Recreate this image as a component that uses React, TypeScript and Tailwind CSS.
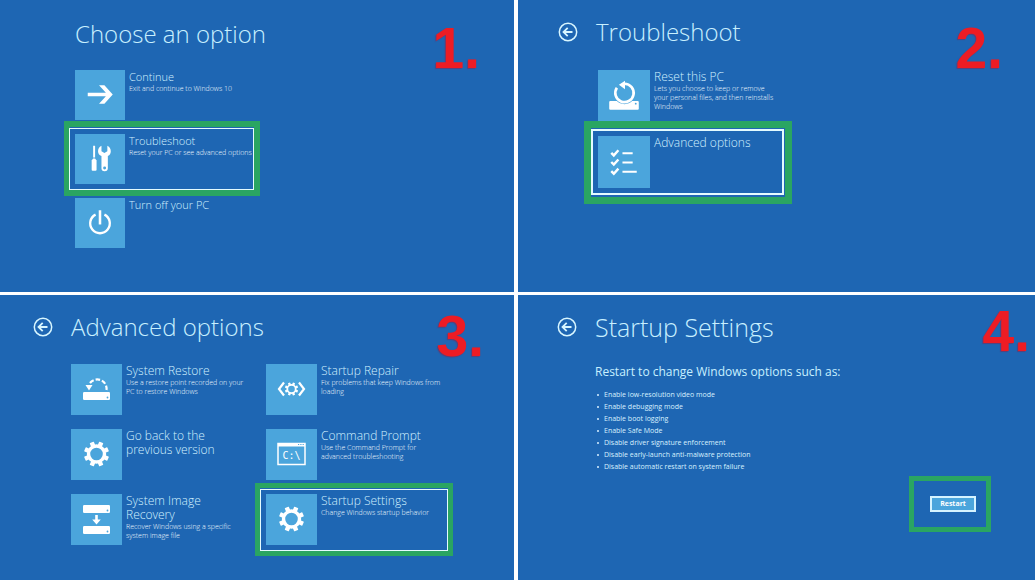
import React from 'react';
import clsx from 'clsx';

type Size = 'sm' | 'md' | 'lg';

const tileSize: Record<Size, string> = {
  sm: 'w-[50px] h-[50px]',
  md: 'w-[51px] h-[51px]',
  lg: 'w-[52px] h-[52px]',
};

const nameSize: Record<Size, string> = {
  sm: 'text-[11px]',
  md: 'text-[12px]',
  lg: 'text-[12px]',
};

function ArrowIcon() {
  return <path fill="#fff" d="M24.500 15.500h5.500l8.500 9.500-8.500 9.500h-5.500l7-7.800H13v-3.400h18.500z" />;
}

function ToolsIcon() {
  return (
    <g fill="#fff">
      <path d="M18.500 12h2v12h-2z" />
      <path d="M17 27l1.500-2h2l1.500 2v9.500q0 1-1 1h-3q-1 0-1-1z" />
      <path
        fillRule="evenodd"
        d="M27 12v5.500l3 2 3-2V12q3.500 2 3.500 5.500 0 3.500-3 5V35q0 3-3.300 3T27 35V22.500q-3.500-1.500-3.500-5T27 12zm3.200 21.200a1.500 1.500 0 1 0 .01 3 1.500 1.500 0 1 0-.01-3z"
      />
    </g>
  );
}

function PowerIcon() {
  return (
    <g fill="none" stroke="#fff" strokeWidth="2.400">
      <path d="M21 17A10 10 0 1 0 30 17" />
      <path d="M25.500 12.500v14.500" strokeWidth="2.600" />
    </g>
  );
}

function Drive({ y }: { y: number }) {
  return (
    <g>
      <rect x="12" y={y} width="27" height="8" rx="1.200" fill="#fff" />
      <circle cx="36.500" cy={y + 5.5} r="0.900" fill="#4ba5dc" />
    </g>
  );
}

function ResetIcon() {
  return (
    <g>
      <rect x="11" y="30.500" width="29" height="8.500" rx="1" fill="#fff" />
      <circle cx="37" cy="33" r="0.900" fill="#4ba5dc" />
      <circle cx="26" cy="22.500" r="11" fill="#4ba5dc" />
      <path d="M18.500 17.500A9 9 0 1 0 26 13.500" fill="none" stroke="#fff" strokeWidth="2.600" />
      <path d="M20.500 14.500l6-4v8.500z" fill="#fff" />
    </g>
  );
}

function ChecklistIcon() {
  return (
    <g fill="none" stroke="#fff" strokeWidth="2">
      {[17, 26, 35].map(y => (
        <path key={y} strokeWidth="2.400" d={`M13 ${y - 0.5}l2.500 2.500 4.500-5`} />
      ))}
      <path d="M24 17h10M24 26h10M24 35h14" />
    </g>
  );
}

function RestoreIcon() {
  return (
    <g>
      <path d="M35.500 26A9.300 9.300 0 0 0 18 20.500" fill="none" stroke="#fff" strokeWidth="2.200" strokeDasharray="4.500 2" />
      <path d="M14.500 21h7l-3.500 5.500z" fill="#fff" />
      <Drive y={28} />
    </g>
  );
}

function GearIcon({ r = 8, width = 3.4, tooth = 4.4 }: { r?: number; width?: number; tooth?: number }) {
  const outer = r + width / 2;
  return (
    <g fill="#fff">
      <circle cx="25.500" cy="25" r={r} fill="none" stroke="#fff" strokeWidth={width} />
      {[22.5, 67.5, 112.5, 157.5, 202.5, 247.5, 292.5, 337.5].map(a => (
        <rect
          key={a}
          x={25.5 - tooth / 2}
          y={25 - outer - tooth * 0.65}
          width={tooth}
          height={tooth}
          rx={tooth / 8}
          transform={`rotate(${a} 25.500 25)`}
        />
      ))}
    </g>
  );
}

function ImageRecoveryIcon() {
  return (
    <g>
      <Drive y={11} />
      <path d="M24.200 21h2.600v4.500h3l-4.300 5-4.300-5h3z" fill="#fff" />
      <Drive y={32} />
    </g>
  );
}

function RepairIcon() {
  return (
    <g>
      <path d="M18 18.500l-5 6.500 5 6.500M33 18.500l5 6.500-5 6.500" fill="none" stroke="#fff" strokeWidth="2.200" />
      <GearIcon r={4.2} width={1.8} tooth={2.4} />
    </g>
  );
}

function PromptIcon() {
  return (
    <g>
      <rect x="12" y="14.500" width="27" height="21" fill="none" stroke="#fff" strokeWidth="1.500" />
      <path d="M12 14h27v3.500H12z" fill="#fff" />
      <path d="M32 15.500h1.200M34.300 15.500h1.200M36.600 15.500h1.200" stroke="#4ba5dc" />
      <text x="25.500" y="29.500" fill="#fff" fontSize="10" fontFamily="'DejaVu Sans Mono', monospace" textAnchor="middle">
        C:\
      </text>
    </g>
  );
}

function BackButton() {
  return (
    <button type="button" aria-label="Back" className="shrink-0">
      <svg viewBox="0 0 20 20" className="block w-5 h-5" fill="none" stroke="#d8f6ff">
        <circle cx="10" cy="10" r="8.700" strokeWidth="1.500" />
        <path d="M5.500 10h9M9.700 5.800L5.500 10l4.200 4.200" strokeWidth="1.800" />
      </svg>
    </button>
  );
}

interface OptionProps {
  name: string;
  text?: string;
  icon: React.ReactNode;
  size: Size;
  nameClass?: string;
  // outline and frame of the option to pick
  outline?: string;
  frame?: string;
}

function Option({ name, text, icon, size, nameClass, outline, frame }: OptionProps) {
  return (
    <button type="button" className={clsx('relative flex items-start gap-1 text-left', outline && 'z-10')}>
      {outline && <span className={clsx('absolute border-[#2aa562]', outline)} />}
      {frame && <span className={clsx('absolute border-[#e4fbff]', frame)} />}
      <span className={clsx('relative shrink-0 bg-[#4ba5dc]', tileSize[size])}>
        <svg viewBox="0 0 51 51" className="block w-full h-full">
          {icon}
        </svg>
      </span>
      <span className="relative flex-1 min-w-0">
        <span className={clsx('block leading-[14px] font-light text-[#d2f1ff]', nameSize[size], nameClass)}>{name}</span>
        {text && <span className="block max-w-[125px] text-[7px] leading-[9px] font-light text-[#f0faff]">{text}</span>}
      </span>
    </button>
  );
}

function Step({ n, className }: { n: number; className: string }) {
  return (
    <span
      className={clsx(
        "absolute font-['Liberation_Sans',Arial,sans-serif] font-bold text-[57px] leading-[58px] text-[#ed1c24] [text-shadow:-1px_1px_1px_#5b3f78]",
        className
      )}
    >
      {n}.
    </span>
  );
}

function Panel({ children, className }: { children: React.ReactNode; className?: string }) {
  return <section className={clsx('relative flex flex-col bg-[#1e66b3]', className)}>{children}</section>;
}

function Title({ children, className = 'text-[24px]' }: { children: React.ReactNode; className?: string }) {
  return <h1 className={clsx('leading-[36px] font-light text-[#c8f0ff] whitespace-nowrap', className)}>{children}</h1>;
}

const settings = [
  'Enable low-resolution video mode',
  'Enable debugging mode',
  'Enable boot logging',
  'Enable Safe Mode',
  'Disable driver signature enforcement',
  'Disable early-launch anti-malware protection',
  'Disable automatic restart on system failure',
];

function App() {
  return (
    <main className="min-h-screen grid grid-cols-[minmax(0,514fr)_minmax(0,517fr)] grid-rows-[292fr_285fr] gap-x-1 gap-y-[3px] bg-white font-['Open_Sans','Noto_Sans',sans-serif]">
      <Panel className="pl-[75px] pt-4">
        <Title>Choose an option</Title>
        <div className="mt-[18px] w-[180px] flex flex-col gap-[14px]">
          <Option size="sm" name="Continue" text="Exit and continue to Windows 10" icon={<ArrowIcon />} />
          <Option
            size="sm"
            name="Troubleshoot"
            text="Reset your PC or see advanced options"
            icon={<ToolsIcon />}
            outline="-left-[11px] -right-[5px] -top-[13px] -bottom-[12px] border-[6px]"
            frame="-left-[6px] right-[1px] -top-[6px] -bottom-[6px] border"
          />
          <Option size="sm" name="Turn off your PC" icon={<PowerIcon />} />
        </div>
        <Step n={1} className="right-[34px] top-[19px]" />
      </Panel>

      <Panel className="pl-10 pt-[14px]">
        <div className="flex items-center gap-[18px]">
          <BackButton />
          <Title>Troubleshoot</Title>
        </div>
        <div className="mt-5 ml-10 w-[184px] flex flex-col gap-[14px]">
          <Option
            size="lg"
            name="Reset this PC"
            text="Lets you choose to keep or remove your personal files, and then reinstalls Windows"
            icon={<ResetIcon />}
          />
          <Option
            size="lg"
            name="Advanced options"
            icon={<ChecklistIcon />}
            outline="-left-[14px] -right-[10px] -top-[15px] -bottom-[16px] border-[7px]"
            frame="-left-[7px] -right-[2px] -top-[7px] -bottom-[7px] border-2"
          />
        </div>
        <Step n={2} className="right-[32px] top-[19px]" />
      </Panel>

      <Panel className="pl-[33px] pt-[14px]">
        <div className="flex items-center gap-[18px]">
          <BackButton />
          <Title>Advanced options</Title>
        </div>
        <div className="mt-[19px] ml-[38px] grid grid-cols-[175px_175px] gap-x-5 gap-y-[14px]">
          <Option size="md" name="System Restore" text="Use a restore point recorded on your PC to restore Windows" icon={<RestoreIcon />} />
          <Option size="md" name="Startup Repair" text="Fix problems that keep Windows from loading" icon={<RepairIcon />} />
          <Option size="md" name="Go back to the previous version" nameClass="max-w-[100px]" icon={<GearIcon />} />
          <Option size="md" name="Command Prompt" text="Use the Command Prompt for advanced troubleshooting" icon={<PromptIcon />} />
          <Option
            size="md"
            name="System Image Recovery"
            nameClass="max-w-[100px]"
            text="Recover Windows using a specific system image file"
            icon={<ImageRecoveryIcon />}
          />
          <Option
            size="md"
            name="Startup Settings"
            text="Change Windows startup behavior"
            icon={<GearIcon />}
            outline="-left-[11px] -right-[12px] -top-[11px] -bottom-[11px] border-[5px]"
            frame="-left-[6px] -right-[7px] -top-[5px] -bottom-[6px] border"
          />
        </div>
        <Step n={3} className="right-[30px] top-[12px]" />
      </Panel>

      <Panel className="pl-[39px] pt-[14px]">
        <div className="flex items-center gap-[18px]">
          <BackButton />
          <Title className="text-[25px]">Startup Settings</Title>
        </div>
        <div className="mt-[17px] ml-[38px]">
          <p className="text-[12px] leading-5 text-[#c8f0ff]">Restart to change Windows options such as:</p>
          <ul className="mt-[7px] text-[7px] leading-[12px] text-[#d8f1ff]">
            {settings.map(s => (
              <li key={s} className="flex items-center gap-[5px]">
                <span className="ml-[2px] w-[2px] h-[2px] rounded-full bg-[#d8f1ff]" />
                {s}
              </li>
            ))}
          </ul>
        </div>
        <div className="mt-[3px] mr-[44px] self-end border-[5px] border-[#2aa562] pl-4 pr-[10px] py-[15px]">
          <button
            type="button"
            className="block w-[46px] h-4 border-2 border-[#d5f3ff] bg-[#4ba5dc] text-[7px] leading-[12px] font-bold text-white"
          >
            Restart
          </button>
        </div>
        <Step n={4} className="right-[5px] top-[7px]" />
      </Panel>
    </main>
  );
}

export default App;
